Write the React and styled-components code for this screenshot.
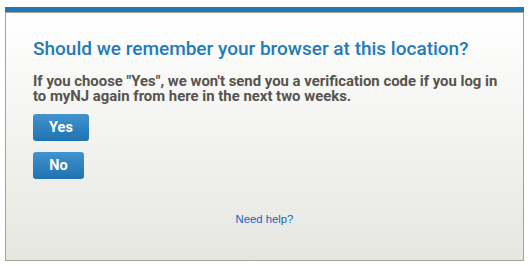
import React from "react";
import styled, { createGlobalStyle } from "styled-components";

const GlobalStyle = createGlobalStyle`
  html, body {
    margin: 0;
    padding: 0;
    background: #ffffff;
  }
`;

const Page = styled.div`
  padding: 7px 6px 5px 5px;
`;

const Dialog = styled.section`
  border-top: 5px solid #2079b4;
  box-sizing: border-box;
  height: 254px;
`;

const Panel = styled.div`
  box-sizing: border-box;
  height: 249px;
  border: 1px solid #a4a48e;
  background: linear-gradient(to bottom, #ffffff 0%, #e6e6e1 100%);
  padding: 25px 27px 0 27px;
  display: flex;
  flex-direction: column;
  align-items: flex-start;
`;

const Title = styled.h2`
  margin: 0;
  font-family: Roboto, "Liberation Sans", sans-serif;
  font-weight: 500;
  font-size: 19px;
  line-height: 22px;
  color: #1f7bba;
`;

const Message = styled.p`
  margin: 14px -10px 0 0;
  max-width: 472px;
  font-family: Roboto, "Liberation Sans", sans-serif;
  font-weight: 700;
  font-size: 14.9px;
  line-height: 14.5px;
  color: #57534e;
`;

const Choices = styled.div`
  margin-top: 11px;
  display: flex;
  flex-direction: column;
  align-items: flex-start;
  gap: 11px;
`;

const Button = styled.button`
  height: 27px;
  width: ${({ $w }) => $w}px;
  padding: 0;
  border: none;
  border-radius: 3px;
  background: linear-gradient(to bottom, #4293ce 0%, #1f72b1 100%);
  color: #ffffff;
  font-family: Roboto, "Liberation Sans", sans-serif;
  font-weight: 700;
  font-size: 14.5px;
  cursor: pointer;
`;

const Help = styled.a`
  align-self: center;
  margin-top: 34px;
  font-family: "Liberation Sans", Arial, sans-serif;
  font-size: 11.3px;
  color: #1a62c0;
  text-decoration: none;
`;

export default function App() {
  return (
    <>
      <GlobalStyle />
      <Page>
        <Dialog>
          <Panel>
            <Title>Should we remember your browser at this location?</Title>
            <Message>
              If you choose "Yes", we won't send you a verification code if you log in
              to myNJ again from here in the next two weeks.
            </Message>
            <Choices>
              <Button $w={56}>Yes</Button>
              <Button $w={51}>No</Button>
            </Choices>
            <Help href="#">Need help?</Help>
          </Panel>
        </Dialog>
      </Page>
    </>
  );
}
